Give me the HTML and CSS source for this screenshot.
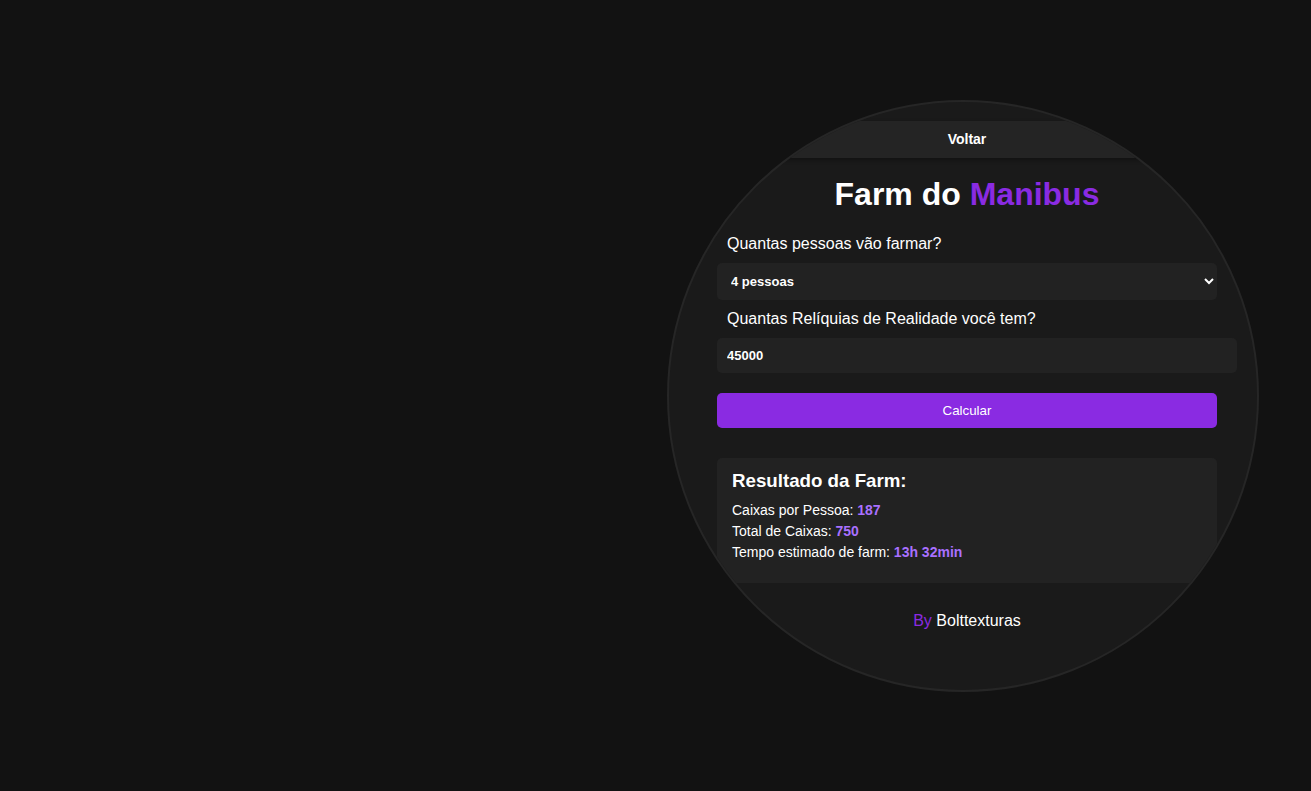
FILE: index.html
```html
<!DOCTYPE html>
<html lang="pt-BR">
<head>
<meta charset="utf-8">
<title>Farm do Manibus</title>
<link rel="stylesheet" href="styles.css">
</head>
<body>
<main class="stage">
  <section class="circle">
    <a class="back" href="#">Voltar</a>
    <div class="content">
      <h1 class="title">Farm do <span class="accent">Manibus</span></h1>
      <label class="field-label" for="people">Quantas pessoas vão farmar?</label>
      <select id="people" class="select">
        <option>4 pessoas</option>
      </select>
      <label class="field-label field-label-second" for="relics">Quantas Relíquias de Realidade você tem?</label>
      <input id="relics" class="input" type="text" value="45000">
      <button class="btn" type="button">Calcular</button>
      <div class="result">
        <h3 class="result-title">Resultado da Farm:</h3>
        <p class="result-line">Caixas por Pessoa: <strong class="val">187</strong></p>
        <p class="result-line">Total de Caixas: <strong class="val">750</strong></p>
        <p class="result-line">Tempo estimado de farm: <strong class="val">13h 32min</strong></p>
      </div>
      <p class="credit"><span class="accent">By</span> Bolttexturas</p>
    </div>
  </section>
</main>
</body>
</html>
```
FILE: styles.css
```css
html, body {
  margin: 0;
  height: 100%;
}

body {
  background: #121212;
  color: #ffffff;
  font-family: "Liberation Sans", Arial, sans-serif;
}

.stage {
  height: 100vh;
  box-sizing: border-box;
  display: flex;
  align-items: center;
  justify-content: flex-end;
  padding-right: 52px;
}

.circle {
  flex-shrink: 0;
  width: 592px;
  height: 592px;
  box-sizing: border-box;
  border: 2px solid #262626;
  border-radius: 50%;
  background: #1a1a1a;
  overflow: hidden;
  padding-top: 19px;
}

.back {
  display: block;
  background: #242424;
  color: #ffffff;
  font-weight: bold;
  font-size: 14px;
  line-height: 17px;
  padding: 10px 0 10px 8px;
  text-align: center;
  text-decoration: none;
  box-shadow: 0 2px 4px rgba(0, 0, 0, 0.35);
}

.content {
  padding: 0 40px 0 48px;
}

.title {
  font-size: 32px;
  font-weight: bold;
  text-align: center;
  margin: 18.5px 0 22px;
}

.accent {
  color: #8a2be2;
}

.field-label {
  display: block;
  font-size: 16px;
  padding-left: 10px;
  margin-bottom: 10px;
}

.field-label-second {
  margin-top: 10px;
}

.select {
  display: block;
  width: 100%;
  height: 37px;
  padding: 0 10px;
  border: none;
  border-radius: 5px;
  background: #222222;
  color: #ffffff;
  font-family: "Liberation Sans", Arial, sans-serif;
  font-size: 13px;
  font-weight: bold;
  outline: none;
}

.input {
  display: block;
  width: 100%;
  height: 15px;
  padding: 10px;
  border: none;
  border-radius: 5px;
  background: #222222;
  color: #ffffff;
  font-family: "Liberation Sans", Arial, sans-serif;
  font-size: 13px;
  font-weight: bold;
  outline: none;
}

.btn {
  display: block;
  width: 100%;
  height: 35px;
  margin-top: 20px;
  border: none;
  border-radius: 5px;
  background: #8a2be2;
  color: #ffffff;
  font-family: "Liberation Sans", Arial, sans-serif;
  font-size: 13.333px;
}

.result {
  margin-top: 30px;
  padding: 12px 15px 18px;
  background: #222222;
  border-radius: 5px;
}

.result-title {
  font-size: 18.72px;
  font-weight: bold;
  margin: 0 0 10px;
}

.result-line {
  font-size: 14px;
  margin: 5px 0;
}

.val {
  color: #a970ff;
}

.credit {
  margin: 29px 0 0;
  font-size: 16px;
  text-align: center;
}
```
